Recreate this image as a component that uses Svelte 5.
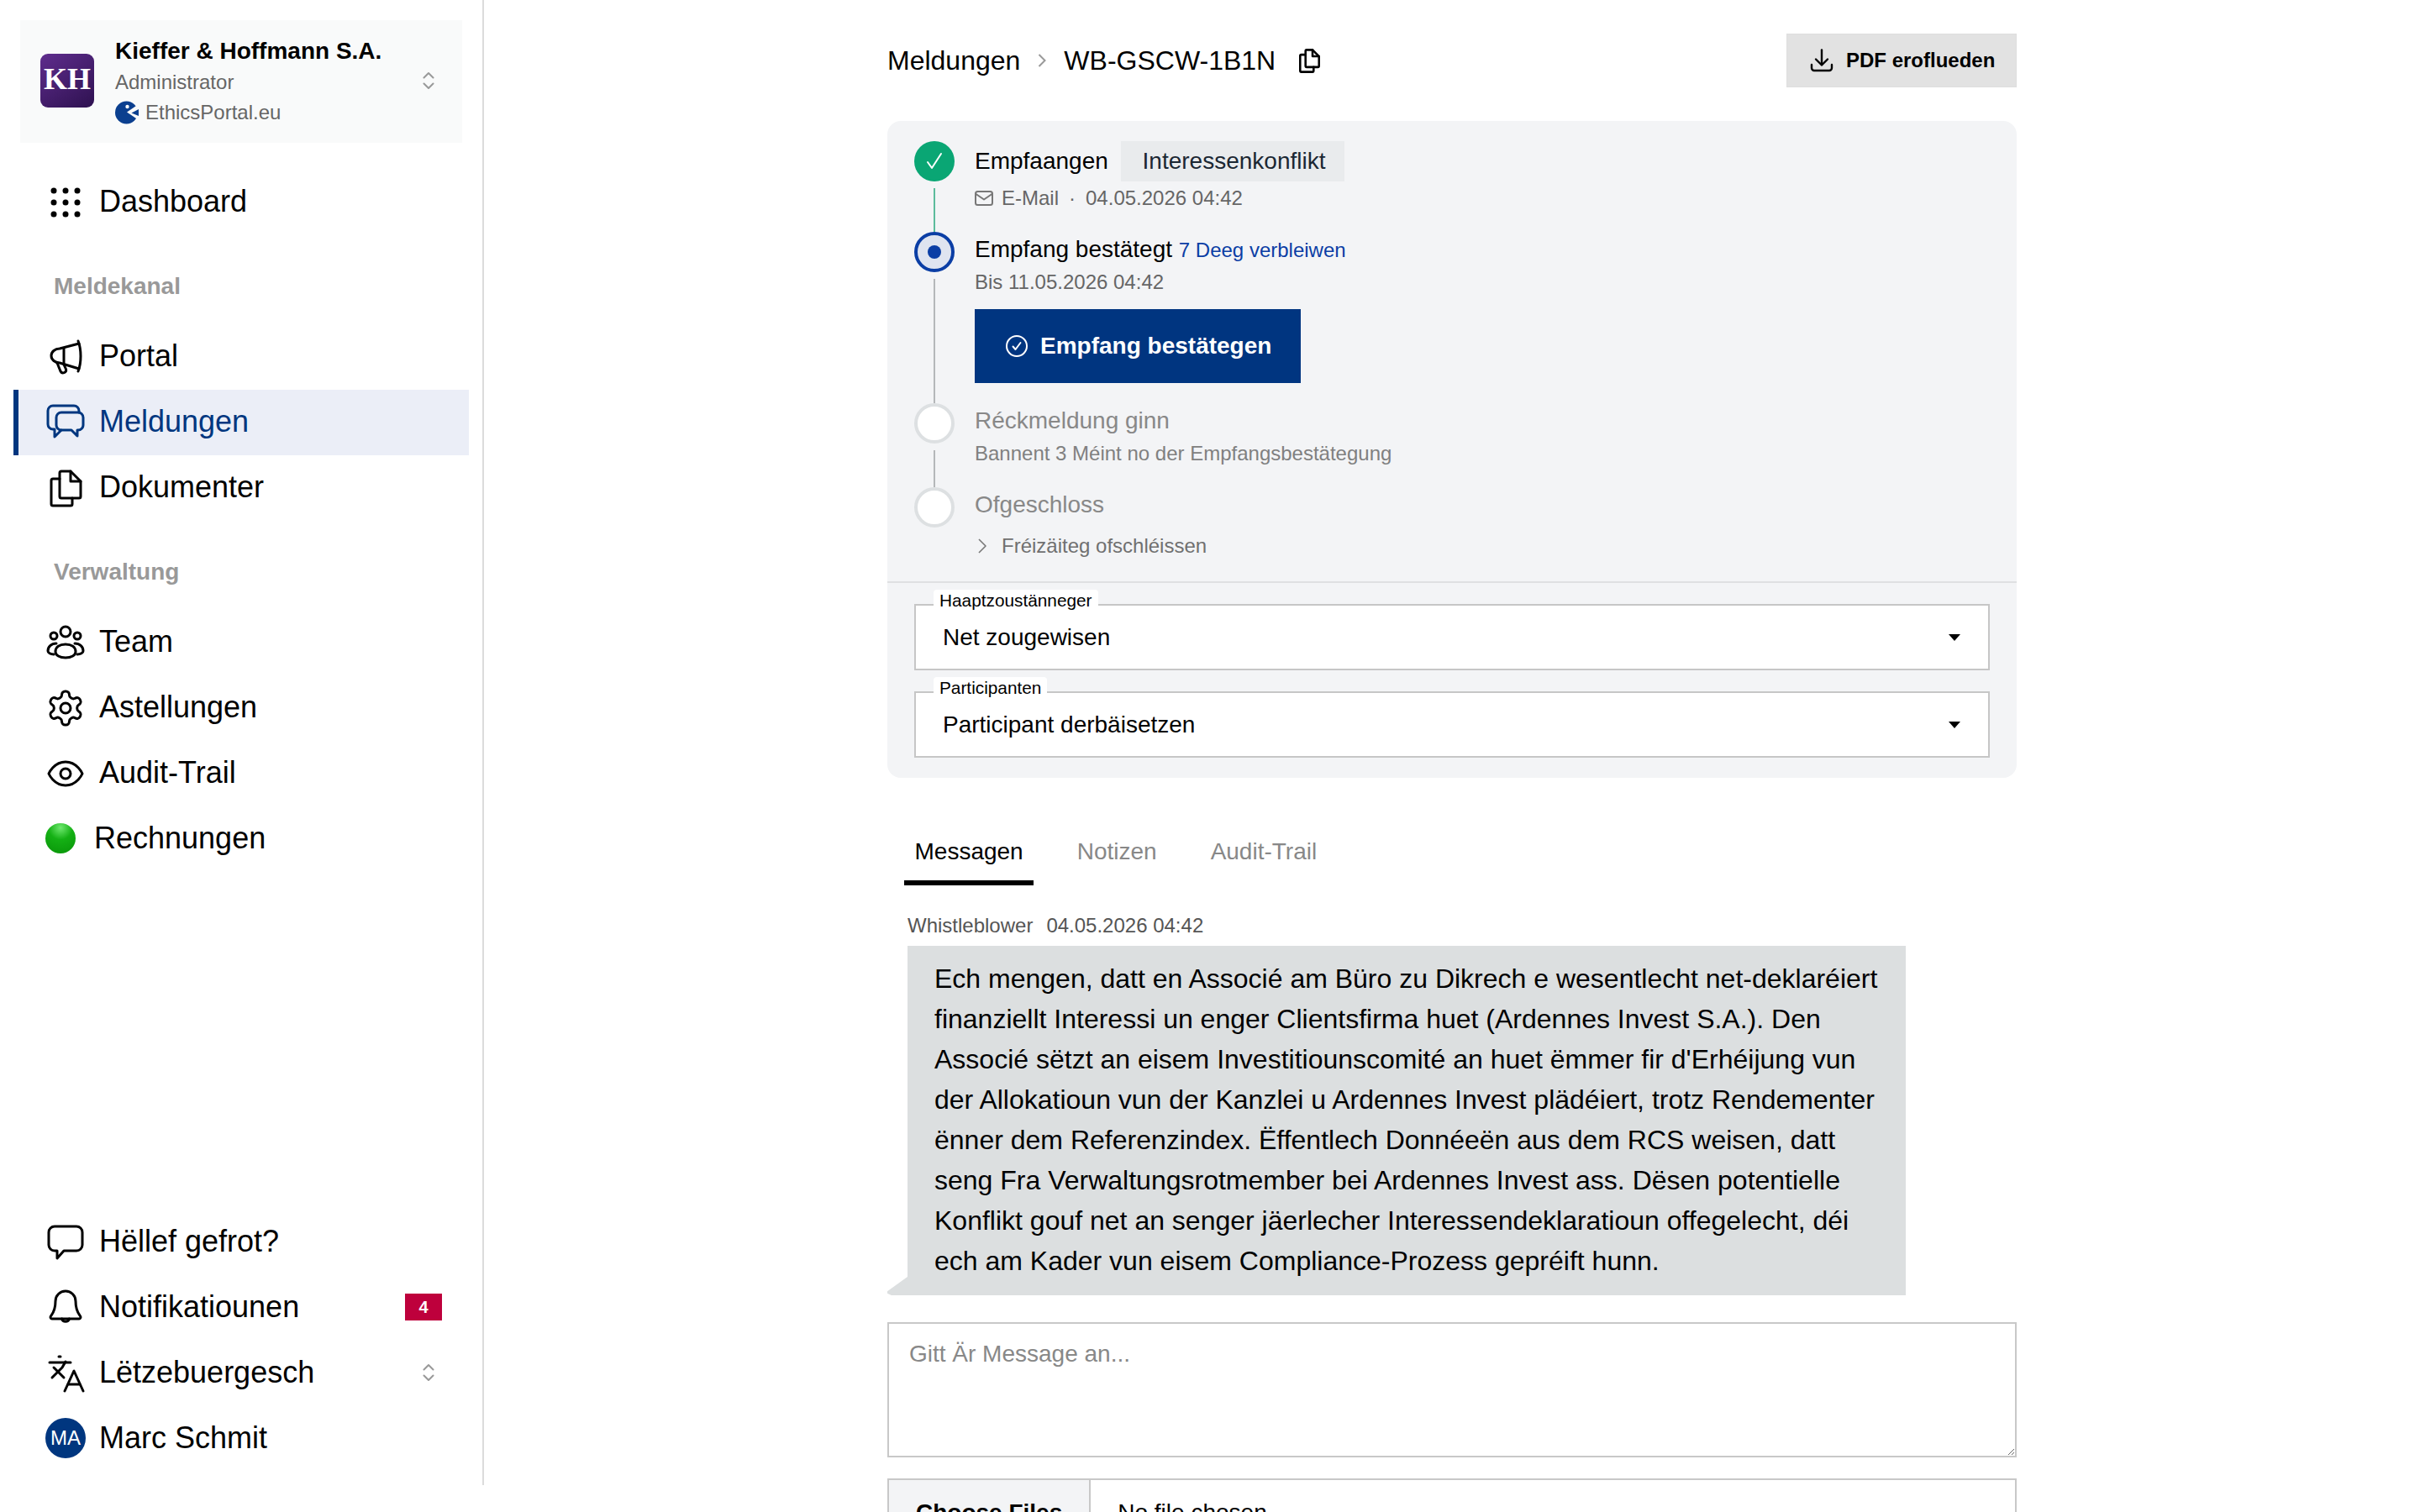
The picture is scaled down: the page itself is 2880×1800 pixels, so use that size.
<script>
  const icons = {
    dots: '<g fill="currentColor" stroke="none"><circle cx="10" cy="10" r="3.5"/><circle cx="24" cy="10" r="3.5"/><circle cx="38" cy="10" r="3.5"/><circle cx="10" cy="24" r="3.5"/><circle cx="24" cy="24" r="3.5"/><circle cx="38" cy="24" r="3.5"/><circle cx="10" cy="38" r="3.5"/><circle cx="24" cy="38" r="3.5"/><circle cx="38" cy="38" r="3.5"/></g>',
    megaphone: '<path d="M40 8 L17 14 a10 8.5 0 0 0 0 17 L40 38"/><path d="M39 5 C43 15 43 31 39 41"/><path d="M22 14 V32"/><path d="M14 31 L18 41 a3.5 3.5 0 0 0 6.5 -2.5 L22 33"/>',
    chats: '<path d="M40 12 V10 a6 6 0 0 0 -6 -6 H9 a6 6 0 0 0 -6 6 V26 a6 6 0 0 0 6 6 h2 v9 l8 -8"/><path d="M21 12 H39 a6 6 0 0 1 6 6 V27 a6 6 0 0 1 -6 6 h-1 v7 l-7 -7 H19 a6 6 0 0 1 -6 -6 V18 a6 6 0 0 1 6 -6 Z" />',
    docs: '<path d="M17 11 V6 a2 2 0 0 1 2 -2 H30 L42 16 V34 a2 2 0 0 1 -2 2 H19 a2 2 0 0 1 -2 -2 Z"/><path d="M30 4 V16 H42"/><path d="M17 13 H9 a2 2 0 0 0 -2 2 V43 a2 2 0 0 0 2 2 H30 a2 2 0 0 0 2 -2 V36"/>',
    team: '<circle cx="24" cy="11" r="6"/><circle cx="10" cy="16" r="4"/><circle cx="38" cy="16" r="4"/><path d="M12 35 c0 -6 5 -9 12 -9 s12 3 12 9 c0 4 -5 7 -12 7 s-12 -3 -12 -7 Z"/><path d="M13 25 c-6 0 -10 4 -10 9 c0 2 3 4 7 4"/><path d="M35 25 c6 0 10 4 10 9 c0 2 -3 4 -7 4"/>',
    gear: '<g transform="scale(2)" stroke-width="1.5"><path d="M12.22 2h-.44a2 2 0 0 0-2 2v.18a2 2 0 0 1-1 1.73l-.43.25a2 2 0 0 1-2 0l-.15-.08a2 2 0 0 0-2.73.73l-.22.38a2 2 0 0 0 .73 2.73l.15.1a2 2 0 0 1 1 1.72v.51a2 2 0 0 1-1 1.74l-.15.09a2 2 0 0 0-.73 2.73l.22.38a2 2 0 0 0 2.73.73l.15-.08a2 2 0 0 1 2 0l.43.25a2 2 0 0 1 1 1.73V20a2 2 0 0 0 2 2h.44a2 2 0 0 0 2-2v-.18a2 2 0 0 1 1-1.73l.43-.25a2 2 0 0 1 2 0l.15.08a2 2 0 0 0 2.73-.73l.22-.39a2 2 0 0 0-.73-2.73l-.15-.08a2 2 0 0 1-1-1.74v-.5a2 2 0 0 1 1-1.74l.15-.09a2 2 0 0 0 .73-2.73l-.22-.38a2 2 0 0 0-2.73-.73l-.15.08a2 2 0 0 1-2 0l-.43-.25a2 2 0 0 1-1-1.73V4a2 2 0 0 0-2-2z"/><circle cx="12" cy="12" r="3"/></g>',
    eye: '<g transform="scale(2)" stroke-width="1.5"><path d="M2 12s3-7 10-7 10 7 10 7-3 7-10 7-10-7-10-7Z"/><circle cx="12" cy="12" r="3"/></g>',
    help: '<path d="M11 5 H37 a7 7 0 0 1 7 7 V27 a7 7 0 0 1 -7 7 H22 L14 43 V34 H11 a7 7 0 0 1 -7 -7 V12 a7 7 0 0 1 7 -7 Z"/>',
    bell: '<g transform="scale(2)" stroke-width="1.5"><path d="M6 8a6 6 0 0 1 12 0c0 7 3 8.5 3 9.5 0 .5-.5 1-1 1H4c-.5 0-1-.5-1-1 0-1 3-2.5 3-9.5"/><path d="M9.8 18.5a2.3 2.3 0 0 0 4.4 0"/></g>',
    lang: '<path d="M10 17 L22 29"/><path d="M8 29 L20 17 L24 10"/><path d="M5 11 H30"/><path d="M16 4 H18"/><path d="M45 45 L34 21 L23 45"/><path d="M27 37 H41"/>'
  };

  const channel = [
    { label: 'Portal', icon: 'megaphone' },
    { label: 'Meldungen', icon: 'chats', active: true },
    { label: 'Dokumenter', icon: 'docs' }
  ];
  const admin = [
    { label: 'Team', icon: 'team' },
    { label: 'Astellungen', icon: 'gear' },
    { label: 'Audit-Trail', icon: 'eye' }
  ];
  const tabs = ['Messagen', 'Notizen', 'Audit-Trail'];
</script>

{#snippet navIcon(name)}
  <svg class="nav-icon" viewBox="0 0 48 48" fill="none" stroke="currentColor" stroke-width="3" stroke-linecap="round" stroke-linejoin="round">
    {@html icons[name]}
  </svg>
{/snippet}

{#snippet updown()}
  <svg class="updown" viewBox="0 0 14 22" fill="none" stroke="#999" stroke-width="2" stroke-linecap="round" stroke-linejoin="round">
    <path d="M1.5 7.5 7 2l5.5 5.5" />
    <path d="M1.5 14.5 7 20l5.5-5.5" />
  </svg>
{/snippet}

<div class="page">
  <aside class="sidebar">
    <div class="org">
      <div class="logo">KH</div>
      <div class="org-text">
        <div class="org-name">Kieffer &amp; Hoffmann S.A.</div>
        <div class="org-line">Administrator</div>
        <div class="org-line brand">
          <svg viewBox="0 0 28 28" width="28" height="28">
            <circle cx="13.5" cy="14" r="13.5" fill="#0b3f8f" />
            <path d="M14 13.5 28 4v19z" fill="#f9fafa" />
            <path d="M19.5 14.5 28 10v8z" fill="#0b3f8f" />
            <circle cx="14.5" cy="7" r="2.2" fill="#f9fafa" />
          </svg>
          EthicsPortal.eu
        </div>
      </div>
      {@render updown()}
    </div>

    <a class="item first" href="#top">{@render navIcon('dots')}Dashboard</a>

    <div class="section">Meldekanal</div>
    {#each channel as row}
      <a class="item" class:active={row.active} href="#top">{@render navIcon(row.icon)}{row.label}</a>
    {/each}

    <div class="section">Verwaltung</div>
    {#each admin as row}
      <a class="item" href="#top">{@render navIcon(row.icon)}{row.label}</a>
    {/each}
    <a class="item billing" href="#top"><span class="dot"></span>Rechnungen</a>

    <div class="bottom">
      <a class="item" href="#top">{@render navIcon('help')}Hëllef gefrot?</a>
      <a class="item" href="#top">{@render navIcon('bell')}Notifikatiounen<span class="badge">4</span></a>
      <a class="item" href="#top">{@render navIcon('lang')}Lëtzebuergesch<span class="push">{@render updown()}</span></a>
      <a class="item" href="#top"><span class="avatar">MA</span>Marc Schmit</a>
    </div>
  </aside>

  <main class="main">
    <div class="content">
      <header class="head">
        <div class="crumbs">
          <span>Meldungen</span>
          <svg class="crumb-sep" viewBox="0 0 10 20" fill="none" stroke="#999" stroke-width="2">
            <path d="M1.5 3l7 7-7 7" />
          </svg>
          <span>WB-GSCW-1B1N</span>
          <svg class="copy" viewBox="5 2 39 45" fill="none" stroke="currentColor" stroke-width="4" stroke-linecap="round" stroke-linejoin="round">
            {@html icons.docs}
          </svg>
        </div>
        <button class="pdf">
          <svg viewBox="0 0 28 28" width="28" height="28" fill="none" stroke="currentColor" stroke-width="2.4" stroke-linecap="round" stroke-linejoin="round">
            <path d="M14 1.5V19" />
            <path d="M7 12.5l7 7 7-7" />
            <path d="M2 19v4a3 3 0 0 0 3 3h18a3 3 0 0 0 3-3v-4" />
          </svg>
          PDF eroflueden
        </button>
      </header>

      <section class="panel">
        <div class="timeline">
          <div class="step s1">
            <div class="marker">
              <span class="circle done">
                <svg viewBox="0 0 24 24" width="24" height="24" fill="none" stroke="#fff" stroke-width="2" stroke-linecap="round" stroke-linejoin="round"><path d="M4 13l5 7L20 3" /></svg>
              </span>
              <span class="line green"></span>
            </div>
            <div class="body">
              <div class="title tall">Empfaangen <span class="tag">Interessenkonflikt</span></div>
              <div class="sub with-icon">
                <svg viewBox="0 0 22 18" width="22" height="18" fill="none" stroke="#777" stroke-width="2" stroke-linejoin="round"><rect x="1" y="1" width="20" height="16" rx="2.5" /><path d="M1.5 4l9.5 6.5L20.5 4" /></svg>
                <span>E-Mail</span><span class="mid">·</span><span>04.05.2026 04:42</span>
              </div>
            </div>
          </div>

          <div class="step s2">
            <div class="marker">
              <span class="circle current"><i></i></span>
              <span class="line"></span>
            </div>
            <div class="body">
              <div class="title">Empfang bestätegt <span class="left">7 Deeg verbleiwen</span></div>
              <div class="sub">Bis 11.05.2026 04:42</div>
              <button class="confirm">
                <svg viewBox="0 0 26 26" width="26" height="26" fill="none" stroke="#fff" stroke-width="2" stroke-linecap="round" stroke-linejoin="round"><circle cx="13" cy="13" r="12" /><path d="M8.5 13.5l3 3.5 6-8" /></svg>
                Empfang bestätegen
              </button>
            </div>
          </div>

          <div class="step s3">
            <div class="marker">
              <span class="circle todo"></span>
              <span class="line"></span>
            </div>
            <div class="body muted">
              <div class="title">Réckmeldung ginn</div>
              <div class="sub">Bannent 3 Méint no der Empfangsbestätegung</div>
            </div>
          </div>

          <div class="step s4">
            <div class="marker">
              <span class="circle todo"></span>
            </div>
            <div class="body muted">
              <div class="title">Ofgeschloss</div>
              <div class="sub with-icon early">
                <svg viewBox="0 0 22 18" width="22" height="18" fill="none" stroke="#777" stroke-width="1.6" stroke-linejoin="round"><path d="M5 1l8 8-8 8" /></svg>
                <span>Fréizäiteg ofschléissen</span>
              </div>
            </div>
          </div>
        </div>

        <div class="fields">
          <div class="select">
            <span class="legend">Haaptzoustänneger</span>
            <span>Net zougewisen</span>
            <i class="caret"></i>
          </div>
          <div class="select">
            <span class="legend">Participanten</span>
            <span>Participant derbäisetzen</span>
            <i class="caret"></i>
          </div>
        </div>
      </section>

      <nav class="tabs">
        {#each tabs as tab, i}
          <span class="tab" class:on={i === 0}>{tab}</span>
        {/each}
      </nav>

      <div class="meta"><span>Whistleblower</span><span>04.05.2026 04:42</span></div>
      <div class="bubble">Ech mengen, datt en Associé am Büro zu Dikrech e wesentlecht net-deklaréiert finanziellt Interessi un enger Clientsfirma huet (Ardennes Invest S.A.). Den Associé sëtzt an eisem Investitiounscomité an huet ëmmer fir d'Erhéijung vun der Allokatioun vun der Kanzlei u Ardennes Invest plädéiert, trotz Rendementer ënner dem Referenzindex. Ëffentlech Donnéeën aus dem RCS weisen, datt seng Fra Verwaltungsrotmember bei Ardennes Invest ass. Dësen potentielle Konflikt gouf net an senger jäerlecher Interessendeklaratioun offegelecht, déi ech am Kader vun eisem Compliance-Prozess gepréift hunn.</div>

      <textarea class="reply" placeholder="Gitt Är Message an..."></textarea>

      <div class="file">
        <span class="file-btn">Choose Files</span>
        <span class="file-name">No file chosen</span>
      </div>
    </div>
  </main>
</div>

<style>
  :global(body) {
    margin: 0;
    background: #fff;
    color: #000;
    font-family: "Liberation Sans", Arial, sans-serif;
  }

  .page {
    display: flex;
    height: 1800px;
    overflow: hidden;
  }

  /* sidebar */
  .sidebar {
    box-sizing: border-box;
    flex: 0 0 576px;
    height: 1768px;
    border-right: 2px solid #dcdcdc;
    padding: 24px 0 16px;
    display: flex;
    flex-direction: column;
  }

  .org {
    box-sizing: border-box;
    height: 146px;
    margin: 0 24px;
    padding: 0 24px;
    background: #f9fafa;
    display: flex;
    align-items: center;
  }

  .logo {
    flex: 0 0 64px;
    height: 64px;
    margin-top: -2px;
    border-radius: 9px;
    background: linear-gradient(145deg, #5f2d8d, #2e1150);
    color: #fff;
    font: bold 36px/60px "Liberation Serif", serif;
    text-align: center;
  }

  .org-text {
    flex: 1;
    margin-left: 25px;
  }

  .org-name {
    margin-top: -1px;
    font-size: 28px;
    font-weight: bold;
    line-height: 39px;
  }

  .org-line {
    font-size: 24px;
    line-height: 36px;
    color: #666;
  }

  .brand {
    display: flex;
    align-items: center;
    gap: 8px;
  }

  .updown {
    width: 14px;
    height: 22px;
    display: block;
    flex: none;
    margin: -2px 9px 0 0;
  }

  .item {
    box-sizing: border-box;
    height: 78px;
    margin-left: 16px;
    width: 542px;
    padding: 0 32px 2px 32px;
    border-left: 6px solid transparent;
    display: flex;
    align-items: center;
    color: #000;
    font-size: 36px;
    text-decoration: none;
  }

  .item.first {
    margin-top: 32px;
  }

  .item.active {
    background: #ebeef7;
    border-left-color: #00367f;
    color: #00367f;
  }

  .nav-icon {
    width: 48px;
    height: 48px;
    margin: 2px 16px 0 0;
    flex: none;
  }

  .section {
    margin: 45px 0 29px 64px;
    color: #999;
    font-size: 28px;
    font-weight: bold;
    line-height: 32px;
  }

  .dot {
    width: 36px;
    height: 36px;
    margin-right: 22px;
    border-radius: 50%;
    background: radial-gradient(circle at 50% 15%, #6ee86e 0, #14b014 40%, #089408 100%);
  }

  .bottom {
    margin-top: auto;
  }

  .badge {
    margin-left: auto;
    width: 44px;
    height: 32px;
    background: #be003c;
    color: #fff;
    font-size: 20px;
    font-weight: bold;
    line-height: 32px;
    text-align: center;
  }

  .push {
    margin-left: auto;
  }

  .push .updown {
    margin: 0 9px 0 0;
  }

  .avatar {
    width: 48px;
    height: 48px;
    margin-right: 16px;
    border-radius: 50%;
    background: #00367f;
    color: #fff;
    font-size: 24px;
    line-height: 48px;
    text-align: center;
    flex: none;
  }

  /* main column */
  .main {
    flex: 1;
  }

  .content {
    width: 1344px;
    margin: 0 auto;
    padding-top: 40px;
  }

  .head {
    display: flex;
    align-items: center;
    justify-content: space-between;
    height: 64px;
  }

  .crumbs {
    display: flex;
    align-items: center;
    font-size: 32px;
  }

  .crumb-sep {
    width: 10px;
    height: 20px;
    margin: 0 21px;
  }

  .copy {
    width: 25px;
    height: 29px;
    margin-left: 28px;
  }

  .pdf {
    box-sizing: border-box;
    width: 274px;
    height: 64px;
    padding: 0 0 0 27px;
    border: 1px solid #dedede;
    background: #e2e2e2;
    color: #000;
    display: flex;
    align-items: center;
    gap: 15px;
    font: bold 24px "Liberation Sans", Arial, sans-serif;
  }

  .panel {
    margin-top: 40px;
    background: #f3f4f6;
    border-radius: 16px;
  }

  .timeline {
    box-sizing: border-box;
    height: 550px;
    padding: 24px 32px 0;
    border-bottom: 2px solid #dfe0e2;
  }

  .step {
    display: flex;
    gap: 24px;
  }

  .s1 { height: 108px; }
  .s2 { height: 204px; }
  .s3 { height: 100px; }
  .s4 { height: 100px; }

  .marker {
    flex: 0 0 48px;
    display: flex;
    flex-direction: column;
    align-items: center;
  }

  .circle {
    box-sizing: border-box;
    width: 48px;
    height: 48px;
    border-radius: 50%;
    display: flex;
    align-items: center;
    justify-content: center;
    flex: none;
  }

  .done {
    background: #0aa674;
  }

  .current {
    background: #dfe4f0;
    border: 4px solid #0b3ea5;
  }

  .current i {
    width: 16px;
    height: 16px;
    border-radius: 50%;
    background: #0b3ea5;
  }

  .todo {
    background: #fff;
    border: 4px solid #dde0e2;
  }

  .line {
    flex: 1;
    width: 2px;
    margin-top: 8px;
    background: #b5b7b9;
  }

  .line.green {
    background: #5cbb9c;
  }

  .title {
    font-size: 28px;
    line-height: 42px;
  }

  .title.tall {
    display: flex;
    align-items: center;
    height: 48px;
    white-space: pre;
  }

  .tag {
    margin-left: 7px;
    padding: 0 23px 0 26px;
    background: #e9ebed;
    color: #1b2733;
    line-height: 48px;
  }

  .left {
    color: #0b3ea5;
    font-size: 24px;
  }

  .sub {
    font-size: 24px;
    line-height: 32px;
    color: #666;
    margin-top: 1px;
  }

  .s1 .sub {
    margin-top: 4px;
  }

  .with-icon {
    display: flex;
    align-items: center;
    gap: 10px;
  }

  .mid {
    margin: 0 2px;
  }

  .confirm {
    margin-top: 16px;
    width: 388px;
    height: 88px;
    padding: 0 0 0 37px;
    border: 0;
    background: #003580;
    color: #fff;
    display: flex;
    align-items: center;
    gap: 15px;
    font: bold 28px "Liberation Sans", Arial, sans-serif;
  }

  .muted .title {
    color: #888;
  }

  .muted .sub {
    color: #808080;
    margin-top: 2px;
  }

  .muted .early {
    margin-top: 12px;
    color: #707070;
  }

  .fields {
    padding: 25px 32px 24px;
    display: flex;
    flex-direction: column;
    gap: 25px;
  }

  .select {
    position: relative;
    box-sizing: border-box;
    height: 79px;
    padding: 1px 33px 0 32px;
    background: #fff;
    border: 2px solid #c6c6c6;
    display: flex;
    align-items: center;
    justify-content: space-between;
    font-size: 28px;
  }

  .legend {
    position: absolute;
    top: -19px;
    left: 21px;
    padding: 0 7px;
    background: #fff;
    border-radius: 4px 4px 0 0;
    font-size: 20.8px;
    line-height: 26px;
  }

  .caret {
    width: 0;
    height: 0;
    border-left: 7.5px solid transparent;
    border-right: 7.5px solid transparent;
    border-top: 8px solid #000;
  }

  .tabs {
    display: flex;
    gap: 39px;
    margin: 54px 0 0 20px;
  }

  .tab {
    padding: 0 12.5px;
    color: #888;
    font-size: 28px;
    line-height: 68px;
    border-bottom: 6px solid transparent;
  }

  .tab.on {
    color: #000;
    border-bottom-color: #000;
  }

  .meta {
    margin: 32px 0 0 24px;
    display: flex;
    gap: 16px;
    color: #555;
    font-size: 24px;
    line-height: 32px;
  }

  .bubble {
    position: relative;
    box-sizing: border-box;
    width: 1188px;
    margin: 8px 0 0 24px;
    padding: 15px 16px 17px 32px;
    background: #dcdfe0;
    font-size: 32px;
    line-height: 48px;
  }

  .bubble::before {
    content: "";
    position: absolute;
    left: -24px;
    bottom: 0;
    width: 24px;
    height: 22px;
    background: #dcdfe0;
    clip-path: polygon(100% 0, 0 78%, 0 90%, 20% 100%, 100% 100%);
  }

  .reply {
    box-sizing: border-box;
    display: block;
    width: 100%;
    height: 161px;
    margin-top: 32px;
    padding: 20px 24px;
    border: 2px solid #c8c8c8;
    border-radius: 0;
    outline: 0;
    font: 28px/32px "Liberation Sans", Arial, sans-serif;
  }

  .reply::placeholder {
    color: #888;
  }

  .file {
    box-sizing: border-box;
    height: 82px;
    margin-top: 25px;
    border: 2px solid #c8c8c8;
    display: flex;
    align-items: center;
    font-size: 28px;
  }

  .file-btn {
    align-self: stretch;
    display: flex;
    align-items: center;
    padding: 0 32px;
    background: #f3f4f6;
    border-right: 2px solid #c8c8c8;
    font-weight: bold;
  }

  .file-name {
    margin-left: 32px;
  }
</style>
